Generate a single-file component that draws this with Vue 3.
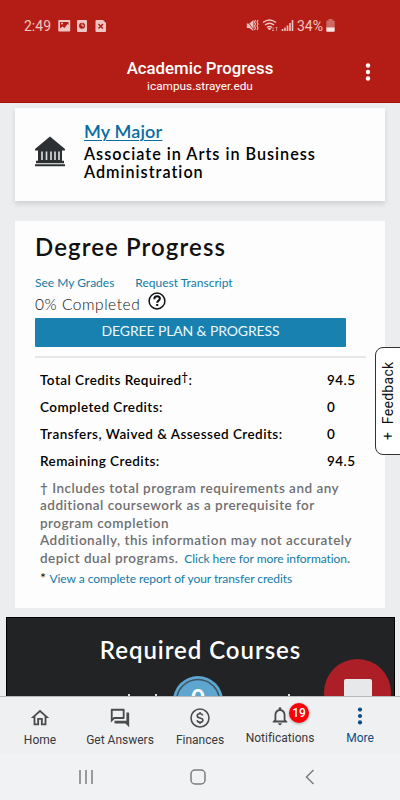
<script setup>
import { ref } from 'vue'

const credits = ref([
  { label: 'Total Credits Required', dagger: true, value: '94.5' },
  { label: 'Completed Credits', value: '0' },
  { label: 'Transfers, Waived & Assessed Credits', value: '0' },
  { label: 'Remaining Credits', value: '94.5' }
])

const tabs = ref([
  { name: 'Home', icon: 'home' },
  { name: 'Get Answers', icon: 'answers' },
  { name: 'Finances', icon: 'money' },
  { name: 'Notifications', icon: 'bell', badge: 19 },
  { name: 'More', icon: 'more' }
])
const activeTab = ref('More')
</script>

<template>
  <div class="phone">
    <header class="top">
      <div class="status">
        <span class="time">2:49</span>
        <svg class="left-icons" width="50" height="14" viewBox="0 0 50 14" fill="#efc5c3">
          <path fill-rule="evenodd" d="M1 1h10.500a.7.700 0 0 1 .7.700v10a.7.700 0 0 1-.7.700H1a.7.700 0 0 1-.7-.7v-10A.7.700 0 0 1 1 1zm1 8.500 2.500-2 2 1.500 3-4 1 1V3H2z" />
          <circle cx="4" cy="4.600" r="1" />
          <rect x="19" y="1" width="10" height="12" rx="1" />
          <circle cx="24" cy="6.800" r="3" fill="#b41d15" />
          <path d="M24 4.500v2.300h2" fill="none" stroke="#efc5c3" />
          <path d="M38.500 1h6.500l3 3v8a1 1 0 0 1-1 1h-8.500a1 1 0 0 1-1-1V2a1 1 0 0 1 1-1z" />
          <path d="M40.500 5l4.500 4.500m0-4.500-4.500 4.500" stroke="#b41d15" stroke-width="1.500" />
        </svg>
        <svg class="right-icons" width="48" height="16" viewBox="0 0 48 16" fill="none" stroke="#efc5c3">
          <path d="M.8 5.500h2.500L7.500 2v11L3.300 10H.8z" fill="#efc5c3" stroke="none" />
          <path d="M.5 2l8 11" stroke="#b41d15" stroke-width=".8" />
          <path d="M9.500 2l-1 2 1 2-1 2 1 2-1 2M12 2l-1 2 1 2-1 2 1 2-1 2" stroke-width="1.100" />
          <path d="M17 4.500q6.500-5 13 0M19 7q4.500-3.500 9 0M21 9.500q2.500-2 5 0" stroke-width="1.500" />
          <path d="M23.500 12l-1.300-1.500h2.600z" fill="#efc5c3" />
          <path d="M27 9v4m-1-1 1 1 1-1M30.500 13V9m-1 1 1-1 1 1" stroke-width=".8" opacity=".7" />
          <path d="M36.500 13v-2M39 13V9.500M41.500 13V7.500M44 13V5M46.500 13V2" stroke-width="1.600" />
        </svg>
        <span class="percent">34%</span>
        <svg width="9" height="14" viewBox="0 0 9 14">
          <path d="M2.500 1.500V0h4v1.500H8a.7.700 0 0 1 .7.700V9H.3V2.200a.7.700 0 0 1 .7-.7z" fill="#cd6a65" />
          <path d="M.3 8.500h8.400V12a.7.700 0 0 1-.7.700H1a.7.700 0 0 1-.7-.7z" fill="#fbe7e6" />
        </svg>
      </div>
      <div class="title-bar">
        <div class="title">Academic Progress</div>
        <div class="url">icampus.strayer.edu</div>
        <svg class="menu" width="6" height="18" viewBox="0 0 6 18" fill="#fff">
          <circle cx="3" cy="2.500" r="2.200" /><circle cx="3" cy="9" r="2.200" /><circle cx="3" cy="15.500" r="2.200" />
        </svg>
      </div>
    </header>

    <main class="content">
      <section class="card major">
        <svg class="bank" width="30" height="31" viewBox="0 0 30 31" fill="#2d3032">
          <path d="M15 .5l15 12.500v1.500H0V13z" />
          <path d="M3 14h24v11H3z" />
          <path d="M7 15.500v8.500M11.500 15.500v8.500M16 15.500v8.500M20 15.500v8.500M24 15.500v8.500" stroke="#d5d6d7" stroke-width="1.700" />
          <path d="M1 24.700h28v2.500H1zM0 28.200h30v2H0z" />
        </svg>
        <div>
          <a class="major-link">My Major</a>
          <div class="major-name">Associate in Arts in Business<br>Administration</div>
        </div>
      </section>

      <section class="card progress">
        <h2>Degree Progress</h2>
        <div class="links">
          <a>See My Grades</a>
          <a>Request Transcript</a>
        </div>
        <div class="completed">
          <span>0% Completed</span>
          <svg width="18" height="18" viewBox="0 0 18 18" fill="none" stroke="#111">
            <circle cx="9" cy="9" r="7.900" stroke-width="1.500" />
            <path d="M6.300 7.200c0-3.800 5.600-3.600 5.600-.6 0 2-2.700 2-2.700 4.100" stroke-width="2" />
            <path d="M8.200 12h2v2h-2z" fill="#111" stroke="none" />
          </svg>
        </div>
        <div class="plan-button">DEGREE PLAN &amp; PROGRESS</div>
        <div class="line"></div>
        <div class="credits">
          <div v-for="row in credits" :key="row.label" class="credit">
            <span>{{ row.label }}<sup v-if="row.dagger">†</sup>:</span>
            <span>{{ row.value }}</span>
          </div>
        </div>
        <div class="note">
          † Includes total program requirements and any<br>
          additional coursework as a prerequisite for<br>
          program completion<br>
          Additionally, this information may not accurately<br>
          depict dual programs. <a>Click here for more information</a>.
        </div>
        <div class="report"><span>*</span> <a>View a complete report of your transfer credits</a></div>
      </section>

      <section class="courses">
        <h2>Required Courses</h2>
        <svg class="ring" width="50" height="50" viewBox="0 0 50 50">
          <circle cx="25" cy="25" r="25" fill="#5ea5d0" />
          <circle cx="25" cy="25" r="21.500" fill="#5ea5d0" stroke="#3c5664" stroke-width="1.500" />
        </svg>
        <span class="ring-number">0</span>
        <i class="speck s1"></i><i class="speck s2"></i><i class="speck s3"></i>
      </section>

      <div class="chat"><div class="bubble"></div></div>
      <div class="feedback">+&nbsp; Feedback</div>
    </main>

    <nav class="tabs">
      <div v-for="tab in tabs" :key="tab.name" class="tab" :class="[tab.icon, { active: tab.name === activeTab }]">
        <svg width="24" height="24" viewBox="0 0 24 24" fill="currentColor">
          <path v-if="tab.icon === 'home'" d="M12 5.690l5 4.500V18h-2v-6H9v6H7v-7.810l5-4.500M12 3L2 12h3v8h6v-6h2v6h6v-8h3L12 3z" />
          <path v-if="tab.icon === 'answers'" d="M15 4v7H5.170L4 12.170V4h11m1-2H3c-.55 0-1 .45-1 1v14l4-4h10c.55 0 1-.45 1-1V3c0-.55-.45-1-1-1zm5 4h-2v9H6v2c0 .55.45 1 1 1h11l4 4V7c0-.55-.45-1-1-1z" />
          <g v-if="tab.icon === 'money'" fill="none" stroke="currentColor">
            <circle cx="12" cy="12" r="9.800" stroke-width="1.700" />
            <path d="M15 9.300c-.4-1.300-1.500-1.900-3-1.900-3.800 0-4 3.500-.8 4.300l1.600.5c3.500.9 3 4.500-.8 4.500-1.700 0-2.800-.7-3.200-2.200M12 5.500v2M12 16.500v2" stroke-width="1.700" />
          </g>
          <path v-if="tab.icon === 'bell'" d="M12 22c1.100 0 2-.9 2-2h-4c0 1.100.9 2 2 2zm6-6v-5c0-3.070-1.630-5.640-4.500-6.320V4c0-.83-.67-1.500-1.500-1.500s-1.500.67-1.500 1.500v.68C7.640 5.360 6 7.920 6 11v5l-2 2v1h16v-1l-2-2zm-2 1H8v-6c0-2.480 1.510-4.500 4-4.500s4 2.020 4 4.500v6z" />
          <g v-if="tab.icon === 'more'"><circle cx="12" cy="5" r="2.300" /><circle cx="12" cy="12" r="2.300" /><circle cx="12" cy="19" r="2.300" /></g>
        </svg>
        <span v-if="tab.badge" class="badge">{{ tab.badge }}</span>
        <span class="label">{{ tab.name }}</span>
      </div>
    </nav>
    <footer class="system">
      <svg width="16" height="16" viewBox="0 0 16 16"><path d="M2 1v14M8 1v14M14 1v14" /></svg>
      <svg class="home-key" width="16" height="16" viewBox="0 0 16 16"><rect x="1" y="1" width="14" height="14" rx="4" /></svg>
      <svg width="10" height="16" viewBox="0 0 10 16"><path d="M8.500 1L1.500 8l7 7" /></svg>
    </footer>
  </div>
</template>

<style>
body {
  margin: 0;
}
</style>

<style scoped>
.phone {
  display: flex;
  flex-direction: column;
  width: 400px;
  height: 800px;
  overflow: hidden;
  background: #ecedef;
  font-family: Lato, "Liberation Sans", sans-serif;
  font-variant-ligatures: none;
  color: #111;
}
.top {
  flex: none;
  box-sizing: border-box;
  height: 103px;
  background: #b41d15;
  border-bottom: 1px solid #a90d08;
  font-family: Roboto, sans-serif;
  color: #fff;
}
.status {
  display: flex;
  align-items: center;
  height: 52px;
  padding: 0 65px 0 24px;
  color: #efc5c3;
  font-size: 14px;
}
.time {
  width: 34px;
}
.right-icons {
  margin-left: auto;
}
.percent {
  width: 28px;
  margin: 0 1px 0 3px;
}
.title-bar {
  position: relative;
  padding-top: 6px;
  text-align: center;
}
.title {
  font-size: 16.800px;
  font-weight: 500;
  line-height: 20px;
}
.url {
  font-size: 11.800px;
  line-height: 16px;
}
.menu {
  position: absolute;
  top: 11px;
  right: 29px;
}
.content {
  position: relative;
  flex: none;
  height: 593px;
  overflow: hidden;
}
.card {
  box-sizing: border-box;
  width: 370px;
  margin-left: 15px;
  background: #fdfdfd;
}
.major {
  display: flex;
  height: 93px;
  margin-top: 5px;
  padding: 14px 0 0 20px;
  box-shadow: 0 3px 5px rgba(0, 0, 0, 0.12);
}
.bank {
  margin: 14px 19px 0 0;
}
.major-link {
  display: block;
  color: #0a6da3;
  font-size: 18px;
  font-weight: 600;
  letter-spacing: 0.150px;
  line-height: 18px;
  text-decoration: underline;
  text-decoration-thickness: 1px;
  text-underline-offset: 2px;
}
.major-name {
  margin-top: 5px;
  color: #000;
  font-size: 16.200px;
  font-weight: 600;
  letter-spacing: 1px;
  line-height: 17.500px;
}
.progress {
  height: 387px;
  margin-top: 20px;
  padding: 12px 20px 0;
}
h2 {
  margin: 0;
  font-size: 24px;
  font-weight: 600;
  letter-spacing: 1.100px;
  line-height: 28px;
}
a {
  color: #127ba5;
}
.links {
  display: flex;
  gap: 21px;
  margin-top: 13px;
  font-size: 12px;
  line-height: 18px;
}
.completed {
  display: flex;
  gap: 8px;
  height: 26px;
  font-size: 15.500px;
  font-weight: 300;
  letter-spacing: 0.550px;
  line-height: 24px;
}
.plan-button {
  width: 311px;
  height: 29px;
  border-radius: 1px;
  background: #1881b0;
  color: #eef8fc;
  font-size: 14px;
  letter-spacing: -0.130px;
  line-height: 26px;
  text-align: center;
}
.line {
  width: 331px;
  height: 2px;
  margin-top: 9px;
  background: #e6e7e8;
}
.credits {
  margin: 9px 0 0 5px;
}
.credit {
  display: flex;
  height: 27px;
  color: #000;
  font-size: 13.500px;
  font-weight: 600;
  letter-spacing: 0.450px;
  line-height: 27px;
}
.credit span:first-child {
  width: 287px;
}
sup {
  font-size: 11px;
  line-height: 0;
  vertical-align: 4px;
}
.note {
  margin: 5px 0 0 5px;
  color: #6e6f70;
  font-size: 13.500px;
  font-weight: 600;
  letter-spacing: 0.490px;
  line-height: 17.400px;
  white-space: nowrap;
}
.note a {
  margin-left: 2px;
  font-size: 12px;
  font-weight: 400;
  letter-spacing: -0.060px;
}
.report {
  margin: 3px 0 0 5px;
  font-size: 12px;
  letter-spacing: -0.060px;
  line-height: 18px;
  white-space: nowrap;
}
.report span {
  margin-right: 1px;
  font-size: 14px;
  line-height: 1;
}
.courses {
  position: relative;
  box-sizing: border-box;
  width: 389px;
  height: 90px;
  margin: 9px 0 0 6px;
  padding-top: 18px;
  border: 1px solid #000;
  background: #222325;
  color: #fff;
  text-align: center;
}
.courses h2 {
  letter-spacing: 0.950px;
}
.ring {
  position: absolute;
  top: 58px;
  left: 166px;
}
.ring-number {
  position: absolute;
  top: 65px;
  left: 166px;
  width: 50px;
  font-size: 24px;
  font-weight: 700;
}
.speck {
  position: absolute;
  top: 76px;
  width: 2px;
  height: 3px;
  background: #ddd;
}
.s1 { left: 121px; }
.s2 { left: 148px; }
.s3 { left: 281px; }
.chat {
  position: absolute;
  top: 556px;
  left: 324px;
  width: 67px;
  height: 67px;
  border-radius: 50%;
  background: #ad1f27;
}
.bubble {
  width: 28px;
  height: 24px;
  margin: 20px 0 0 20px;
  border-radius: 2px;
  background: #e7e8ea;
}
.feedback {
  position: absolute;
  top: 244px;
  right: -2px;
  box-sizing: border-box;
  width: 27px;
  height: 108px;
  border: 1px solid #333;
  border-radius: 0 8px 8px 0;
  background: #fff;
  font-family: Roboto, sans-serif;
  font-size: 14px;
  letter-spacing: 0.300px;
  line-height: 25px;
  text-align: center;
  writing-mode: vertical-rl;
  transform: rotate(180deg);
}
.tabs {
  display: grid;
  grid-template-columns: repeat(5, 80px);
  box-sizing: border-box;
  height: 58px;
  border-top: 1px solid #b9babb;
  background: #eff0f2;
  color: #4a4b4d;
  font-family: Roboto, sans-serif;
}
.tab {
  position: relative;
  display: flex;
  flex-direction: column;
  align-items: center;
  padding-top: 10px;
}
.tab svg {
  width: 22px;
  height: 22px;
}
.label {
  margin-top: 3px;
  color: #38393b;
  font-size: 12px;
  line-height: 16px;
}
.tab.bell,
.tab.more {
  padding-top: 8px;
}
.active,
.active .label {
  color: #0b4d85;
}
.badge {
  position: absolute;
  top: 6px;
  left: 49px;
  width: 20px;
  height: 20px;
  border-radius: 50%;
  background: #fb0007;
  box-shadow: 0 1px 3px rgba(0, 0, 0, 0.300);
  color: #fff;
  font-size: 12px;
  font-weight: 500;
  line-height: 20px;
  text-align: center;
}
.system {
  display: flex;
  justify-content: space-between;
  flex: 1;
  padding: 15px 85px 0 78px;
  background: #f1f2f4;
}
.system svg {
  fill: none;
  stroke: #7d7e80;
  stroke-width: 1.500;
}
.home-key {
  margin-right: 4px;
}
</style>
